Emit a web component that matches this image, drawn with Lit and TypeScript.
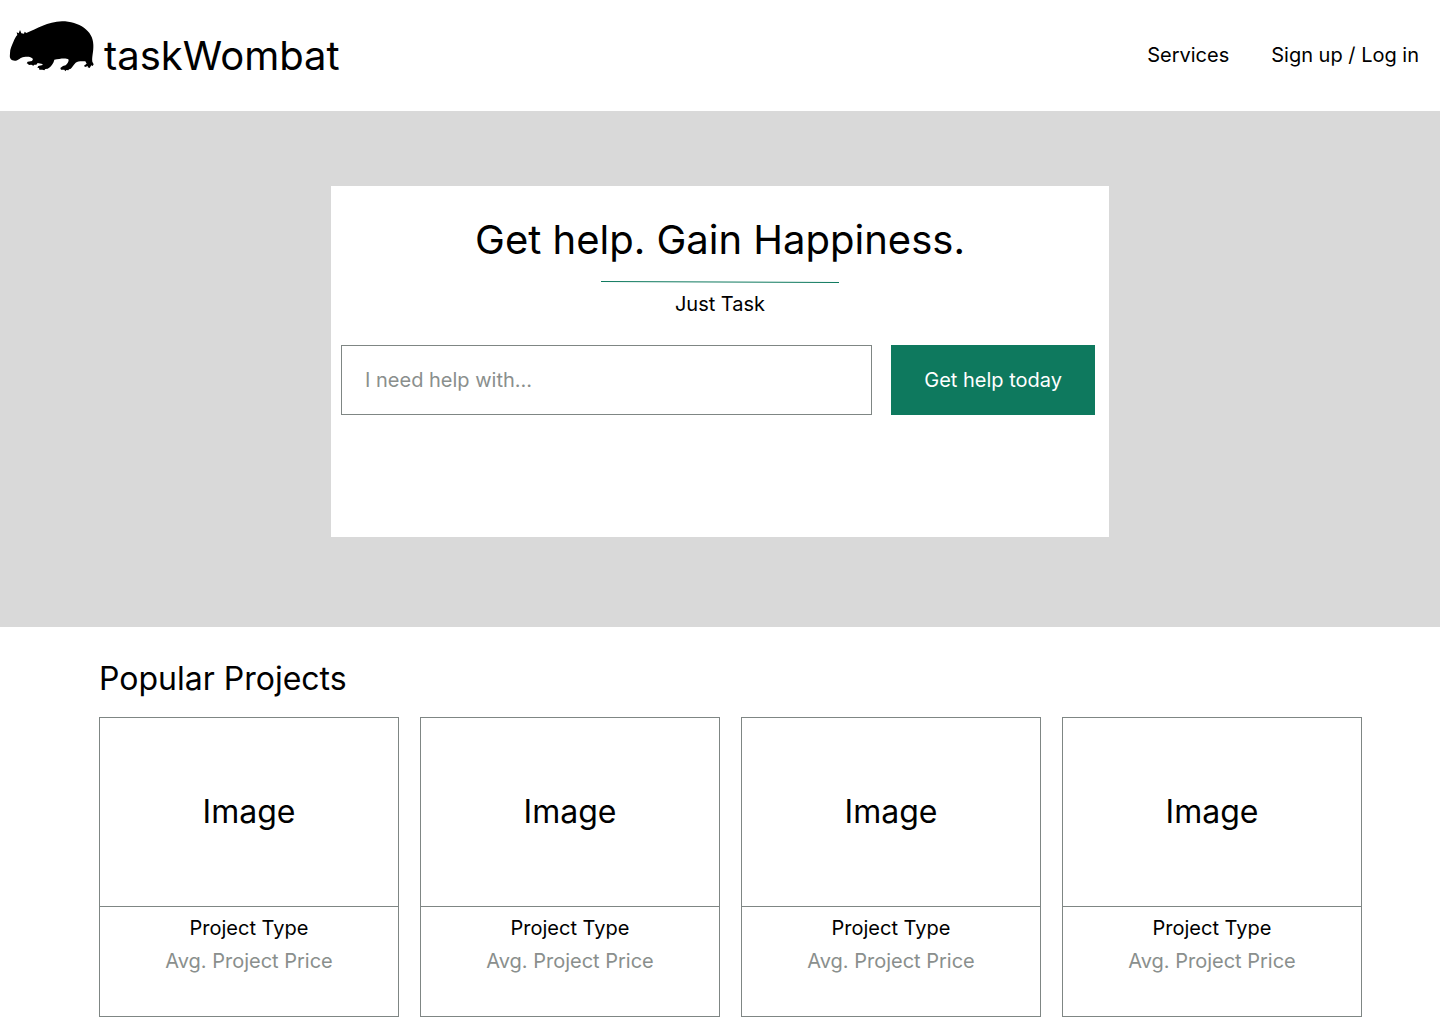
import { LitElement, html, css } from "lit";
import { customElement, property } from "lit/decorators.js";

@customElement("project-card")
class ProjectCard extends LitElement {
  @property() name = "";
  @property() price = "";

  static styles = css`
    :host {
      display: flex;
      flex-direction: column;
      border: 1px solid #7f8684;
      color: #000;
    }
    .picture {
      display: flex;
      align-items: center;
      justify-content: center;
      min-height: 188px;
      border-bottom: 1px solid #7f8684;
      font-size: 32px;
      line-height: 40px;
    }
    .details {
      display: flex;
      flex-direction: column;
      gap: 9px;
      padding: 9px 8px 43px;
      text-align: center;
      font-size: 20px;
      line-height: 24px;
    }
    .name {
      margin: 0;
      font: inherit;
    }
    .price {
      margin: 0;
      color: #8a8f8d;
    }
  `;

  render() {
    return html`
      <div class="picture">Image</div>
      <div class="details">
        <h3 class="name">${this.name}</h3>
        <p class="price">${this.price}</p>
      </div>
    `;
  }
}

@customElement("app-root")
class AppRoot extends LitElement {
  private projects = Array.from({ length: 4 }, () => ({
    name: "Project Type",
    price: "Avg. Project Price",
  }));

  static styles = css`
    :host {
      display: block;
      background: #fff;
      color: #000;
      font-family: Inter, "Liberation Sans", sans-serif;
      font-size: 20px;
      line-height: 24px;
    }
    * {
      box-sizing: border-box;
    }
    a {
      color: inherit;
      text-decoration: none;
    }
    .header {
      display: flex;
      align-items: center;
      justify-content: space-between;
      flex-wrap: wrap;
      min-height: 111px;
      padding: 0 21px 0 9px;
    }
    .brand {
      display: flex;
      align-items: center;
      gap: 9px;
      font-size: 40px;
      line-height: 48px;
    }
    .wombat {
      display: block;
      width: 86px;
      height: 52px;
      margin-bottom: 19px;
    }
    .nav {
      display: flex;
      gap: 42px;
      padding-bottom: 2px;
    }
    .hero {
      display: flex;
      justify-content: center;
      padding: 75px 16px 90px;
      background: #d9d9d9;
    }
    .panel {
      display: flex;
      flex-direction: column;
      align-items: center;
      width: 100%;
      max-width: 778px;
      padding: 30px 0 122px;
      background: #fff;
      text-align: center;
    }
    .title {
      margin: 0;
      font-size: 40px;
      font-weight: 400;
      line-height: 48px;
    }
    .rule {
      display: block;
      width: 238px;
      height: 4px;
      margin: 16px 0 8px;
    }
    .tagline {
      margin: 0 0 29px;
    }
    .search {
      display: flex;
      gap: 19px;
      width: 100%;
      padding: 0 14px 0 10px;
    }
    .field,
    .submit {
      height: 70px;
      border-radius: 0;
      font: inherit;
    }
    .field {
      flex: 1;
      min-width: 0;
      padding: 0 23px;
      border: 1px solid #7f8684;
      background: #fff;
      color: #000;
    }
    .field::placeholder {
      color: #8a8f8d;
      opacity: 1;
    }
    .submit {
      padding: 0 33px;
      border: 0;
      background: #0e795e;
      color: #fff;
    }
    .projects {
      padding: 32px 78px 7px 99px;
    }
    .heading {
      margin: 0 0 18px;
      font-size: 32px;
      font-weight: 400;
      line-height: 40px;
    }
    .grid {
      display: grid;
      grid-template-columns: repeat(4, 1fr);
      gap: 21px;
    }
  `;

  render() {
    return html`
      <header class="header">
        <a class="brand" href="#">
          <svg class="wombat" viewBox="28 30 258 156" aria-hidden="true">
            <path
              d="M31 130 C31 116 37 106 41 96 C45 87 48 80 53 75 L51 67 L57 70 L61 60 L65 70 L73 71 L75 65 L80 69 C112 57 143 35 187 34 C238 34 281 63 281 104 C282 125 276 140 278 155 L282 163 L279 168 L275 166 L270 174 L264 172 L265 168 L256 171 L253 167 L261 161 L257 154 C246 153 235 153 228 158 C220 166 217 173 212 177 L208 178 L206 181 L200 180 L197 184 L194 179 L184 179 L182 174 L190 168 L198 166 C203 161 207 155 207 149 C198 143 180 147 164 149 C162 160 153 171 144 176 L137 177 L134 181 L128 179 L119 179 L118 174 L113 173 L116 168 L129 165 L128 162 L114 159 L110 164 L104 164 L101 167 L95 164 L87 165 L86 162 L81 160 L84 155 L97 153 L100 147 C94 139 82 139 73 141 C61 143 57 151 48 152 C42 153 36 150 33 147 C29 142 31 136 31 130 Z"
            />
          </svg>
          <span>taskWombat</span>
        </a>
        <nav class="nav">
          <a href="#services">Services</a>
          <a href="#account">Sign up / Log in</a>
        </nav>
      </header>
      <main>
        <section class="hero">
          <div class="panel">
            <h1 class="title">Get help. Gain Happiness.</h1>
            <svg class="rule" viewBox="0 0 238 4" aria-hidden="true">
              <path d="M0 1.5 L238 2.5" stroke="#0e795e" />
            </svg>
            <p class="tagline">Just Task</p>
            <form class="search" @submit=${(e: Event) => e.preventDefault()}>
              <input
                class="field"
                type="text"
                aria-label="I need help with..."
                placeholder="I need help with..."
              />
              <button class="submit" type="submit">Get help today</button>
            </form>
          </div>
        </section>
        <section class="projects" id="services">
          <h2 class="heading">Popular Projects</h2>
          <div class="grid">
            ${this.projects.map(
              (p) => html`<project-card .name=${p.name} .price=${p.price}></project-card>`
            )}
          </div>
        </section>
      </main>
    `;
  }
}
